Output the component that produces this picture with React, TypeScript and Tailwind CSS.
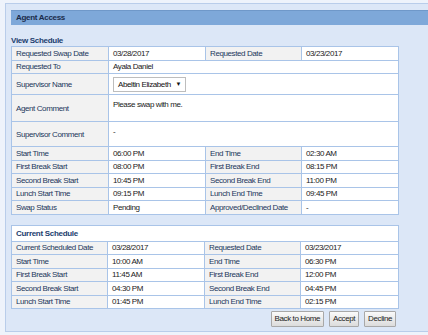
import React from "react";

const font = { fontFamily: "'Liberation Sans', Arial, sans-serif" };

const swapRows = [
  ["Start Time", "06:00 PM", "End Time", "02:30 AM"],
  ["First Break Start", "08:00 PM", "First Break End", "08:15 PM"],
  ["Second Break Start", "10:45 PM", "Second Break End", "11:00 PM"],
  ["Lunch Start Time", "09:15 PM", "Lunch End Time", "09:45 PM"],
  ["Swap Status", "Pending", "Approved/Declined Date", "-"],
];

const currentRows = [
  ["Current Scheduled Date", "03/28/2017", "Requested Date", "03/23/2017"],
  ["Start Time", "10:00 AM", "End Time", "06:30 PM"],
  ["First Break Start", "11:45 AM", "First Break End", "12:00 PM"],
  ["Second Break Start", "04:30 PM", "Second Break End", "04:45 PM"],
  ["Lunch Start Time", "01:45 PM", "Lunch End Time", "02:15 PM"],
];

const lbl =
  "border border-[#a9c4e8] bg-[#f2f2f2] px-[4px] py-0 text-[#22375c] align-middle whitespace-nowrap overflow-hidden";
const val =
  "border border-[#a9c4e8] bg-white px-[4px] py-0 text-[#1a1a1a] align-middle whitespace-nowrap overflow-hidden";

const FourCol = ({ row }: { row: string[] }) => (
  <tr className="h-[13.5px]">
    <td className={lbl}>{row[0]}</td>
    <td className={val}>{row[1]}</td>
    <td className={lbl}>{row[2]}</td>
    <td className={val}>{row[3]}</td>
  </tr>
);

const Btn = ({ children }: { children: React.ReactNode }) => (
  <button
    type="button"
    className="h-[16px] px-[3px] border border-[#a8a8a8] rounded-[1px] bg-gradient-to-b from-[#fafafa] to-[#dcdcdc] text-[8px] tracking-[-0.4px] leading-none text-[#222] whitespace-nowrap"
  >
    {children}
  </button>
);

export default function App() {
  return (
    <div className="w-[428px] h-[335px] bg-[#eef3fb] pt-[3px] pl-[5px] overflow-hidden" style={font}>
      <div className="w-[423px] h-[329px] bg-[#dce7f7] border-l border-t border-b border-[#b9cdea] pt-[6px] pl-[5px]">
        <div className="h-[15px] bg-[#7ea8d9] border-t border-[#6f98c9] flex items-center pl-[5px] text-[8px] tracking-[-0.3px] font-bold text-[#1a2b4a]">
          Agent Access
        </div>

        <div className="mt-[10px] text-[8px] tracking-[-0.3px] font-bold text-[#1c3d6e] leading-[11px]">
          View Schedule
        </div>

        <table className="w-[387px] border-collapse table-fixed text-[8px] tracking-[-0.4px] leading-[9px]">
          <colgroup>
            <col className="w-[97px]" />
            <col className="w-[97px]" />
            <col className="w-[96px]" />
            <col className="w-[97px]" />
          </colgroup>
          <tbody>
            <FourCol row={["Requested Swap Date", "03/28/2017", "Requested Date", "03/23/2017"]} />
            <tr className="h-[13.5px]">
              <td className={lbl}>Requested To</td>
              <td className={val} colSpan={3}>
                Ayala Daniel
              </td>
            </tr>
            <tr className="h-[21px]">
              <td className={lbl}>Supervisor Name</td>
              <td className={val} colSpan={3}>
                <div className="w-[73px] h-[15px] border border-[#bdbdbd] bg-white flex items-center justify-between px-[4px] text-[#111]">
                  <span>Abeltin Elizabeth</span>
                  <span className="text-[6px]">▼</span>
                </div>
              </td>
            </tr>
            <tr className="h-[27px]">
              <td className={lbl}>Agent Comment</td>
              <td className={val + " !align-top pt-[5px]"} colSpan={3}>
                Please swap with me.
              </td>
            </tr>
            <tr className="h-[25px]">
              <td className={lbl}>Supervisor Comment</td>
              <td className={val + " !align-top pt-[5px]"} colSpan={3}>
                -
              </td>
            </tr>
            {swapRows.map((r) => (
              <FourCol key={r[0]} row={r} />
            ))}
          </tbody>
        </table>

        <table className="mt-[10px] w-[387px] border-collapse table-fixed text-[8px] tracking-[-0.4px] leading-[9px] bg-white">
          <colgroup>
            <col className="w-[96px]" />
            <col className="w-[97px]" />
            <col className="w-[96px]" />
            <col className="w-[98px]" />
          </colgroup>
          <tbody>
            <tr className="h-[16px]">
              <td
                colSpan={4}
                className="border border-[#a9c4e8] px-[4px] text-[8px] tracking-[-0.3px] font-bold text-[#1c3d6e]"
              >
                Current Schedule
              </td>
            </tr>
            {currentRows.map((r) => (
              <FourCol key={r[0]} row={r} />
            ))}
          </tbody>
        </table>

        <div className="w-[387px] mt-[2px] flex justify-end gap-[5px] pr-[2px]">
          <Btn>Back to Home</Btn>
          <Btn>Accept</Btn>
          <Btn>Decline</Btn>
        </div>
      </div>
    </div>
  );
}
